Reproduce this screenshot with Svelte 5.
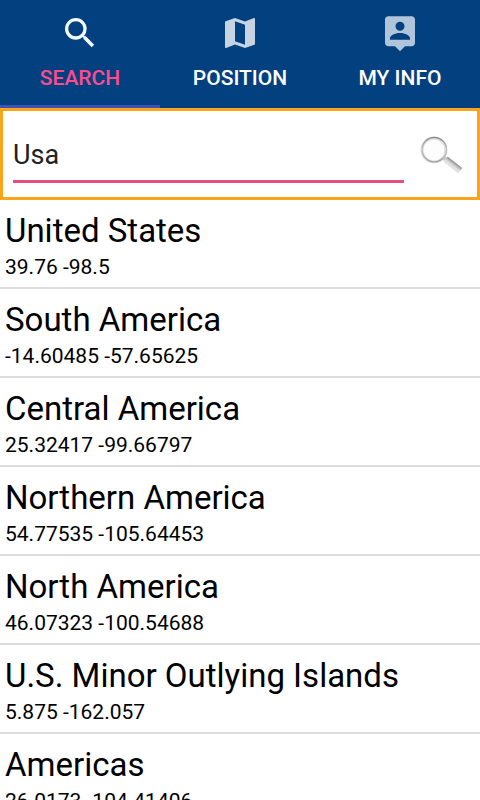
<script>
  const tabs = [
    {
      label: 'SEARCH',
      fill: '#f4fbff',
      path: 'M15.5 14h-.79l-.28-.27A6.471 6.471 0 0 0 16 9.5 6.5 6.5 0 1 0 9.5 16c1.61 0 3.09-.59 4.23-1.57l.27.28v.79l5 4.99L20.49 19l-4.99-5zm-6 0C7.01 14 5 11.99 5 9.5S7.01 5 9.5 5 14 7.01 14 9.5 11.99 14 9.5 14z'
    },
    {
      label: 'POSITION',
      fill: '#c5d3e3',
      path: 'M20.5 3l-.16.03L15 5.1 9 3 3.36 4.9c-.21.07-.36.25-.36.48V20.5c0 .28.22.5.5.5l.16-.03L9 18.9l6 2.1 5.64-1.9c.21-.07.36-.25.36-.48V3.5c0-.28-.22-.5-.5-.5zM15 19l-6-2.11V5l6 2.11V19z'
    },
    {
      label: 'MY INFO',
      fill: '#b0c4dc',
      path: 'M19 2H5c-1.11 0-2 .9-2 2v14c0 1.1.89 2 2 2h4l3 3 3-3h4c1.1 0 2-.9 2-2V4c0-1.1-.9-2-2-2zm-7 3.3c1.49 0 2.7 1.21 2.7 2.7s-1.21 2.7-2.7 2.7S9.3 9.49 9.3 8s1.21-2.7 2.7-2.7zM18 16H6v-.9c0-2 4-3.1 6-3.1s6 1.1 6 3.1v.9z'
    }
  ];

  const places = [
    { name: 'United States', coords: '39.76 -98.5' },
    { name: 'South America', coords: '-14.60485 -57.65625' },
    { name: 'Central America', coords: '25.32417 -99.66797' },
    { name: 'Northern America', coords: '54.77535 -105.64453' },
    { name: 'North America', coords: '46.07323 -100.54688' },
    { name: 'U.S. Minor Outlying Islands', coords: '5.875 -162.057' },
    { name: 'Americas', coords: '26.0173 -104.41406' }
  ];

  let active = $state('SEARCH');
  let query = $state('Usa');
</script>

<div class="app">
  <nav class="tabs">
    {#each tabs as tab}
      <button class="tab" class:active={active === tab.label} onclick={() => (active = tab.label)}>
        <svg viewBox="0 0 24 24" width="40" height="40" aria-hidden="true">
          <path d={tab.path} fill={tab.fill} />
        </svg>
        <span>{tab.label}</span>
      </button>
    {/each}
  </nav>

  <form class="search" onsubmit={(e) => e.preventDefault()}>
    <input type="text" aria-label="Search place" bind:value={query} />
    <button class="go" aria-label="Search">
      <svg viewBox="0 0 44 40" width="44" height="40" aria-hidden="true">
        <defs>
          <linearGradient id="rim" x1="0" y1="0" x2="0" y2="1">
            <stop offset="0" stop-color="#8f8f8f" />
            <stop offset="0.5" stop-color="#c4c4c4" />
            <stop offset="1" stop-color="#a0a0a0" />
          </linearGradient>
          <linearGradient id="grip" x1="0" y1="0" x2="0" y2="1">
            <stop offset="0" stop-color="#8c8c8c" />
            <stop offset="0.35" stop-color="#c2c2c2" />
            <stop offset="0.6" stop-color="#dedede" />
            <stop offset="1" stop-color="#e8e8e8" />
          </linearGradient>
        </defs>
        <circle cx="14" cy="16" r="12" fill="#fdfdfd" stroke="#dedede" stroke-width="3" />
        <circle cx="14.3" cy="15.7" r="12.2" fill="none" stroke="url(#rim)" stroke-width="1.3" />
        <g transform="translate(24.5 24.5) rotate(38)">
          <rect x="-1" y="-2" width="4" height="4" fill="#c8c8c8" />
          <rect x="1" y="-3.5" width="19" height="7" rx="1" fill="url(#grip)" />
        </g>
      </svg>
    </button>
  </form>

  <ul class="places">
    {#each places as place}
      <li>
        <h2>{place.name}</h2>
        <p>{place.coords}</p>
      </li>
    {/each}
  </ul>
</div>

<style>
  :global(body) {
    margin: 0;
    background: #fff;
  }

  .app {
    display: flex;
    flex-direction: column;
    height: 100vh;
    overflow: hidden;
    font-family: Roboto, sans-serif;
    color: #000;
  }

  .tabs {
    display: flex;
    flex: none;
    background: #03407f;
  }

  .tab {
    flex: 1;
    display: flex;
    flex-direction: column;
    align-items: center;
    gap: 13px;
    padding: 13px 0 15px;
    border: 0;
    border-bottom: 3px solid transparent;
    background: none;
    color: #fff;
    font: 500 21px/24px Roboto, sans-serif;
  }

  .tab svg {
    display: block;
  }

  .tab.active {
    border-bottom-color: #3f51b5;
    color: #ff4a8d;
  }

  .search {
    display: flex;
    flex: none;
    align-items: center;
    gap: 16px;
    padding: 10px 13px 14px 10px;
    border: 3px solid #faa41a;
  }

  input {
    flex: 1;
    min-width: 0;
    box-sizing: border-box;
    height: 62px;
    padding: 8px 0 0;
    border: 0;
    border-bottom: 3px solid #e94b83;
    outline: 0;
    border-radius: 0;
    background: none;
    color: #212121;
    font: 400 27px/32px Roboto, sans-serif;
  }

  .go {
    padding: 4px 0 0;
    border: 0;
    background: none;
  }

  .go svg {
    display: block;
  }

  .places {
    flex: 1;
    min-height: 0;
    margin: 0;
    padding: 0;
    overflow: hidden;
    list-style: none;
  }

  li {
    padding: 11px 5px 4px;
    border-bottom: 2px solid #dcdcdc;
  }

  h2 {
    margin: 0;
    font-size: 33px;
    font-weight: 400;
    line-height: 40px;
  }

  p {
    margin: 0;
    font-size: 21px;
    line-height: 32px;
  }
</style>
